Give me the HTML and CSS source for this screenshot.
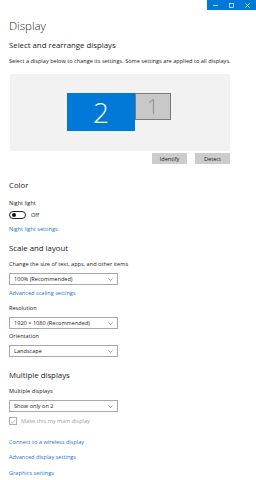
FILE: index.html
```html
<!DOCTYPE html>
<html>
<head>
<meta charset="utf-8">
<link rel="stylesheet" href="styles.css">
</head>
<body>
<div class="titlebar">
  <div class="controls">
    <span class="ctl"><svg width="5" height="5" viewBox="0 0 5 5"><path d="M0 2.5H5" stroke="#fff" stroke-width="0.7"/></svg></span>
    <span class="ctl"><svg width="5" height="5" viewBox="0 0 5 5"><rect x="0.5" y="0.5" width="4" height="4" fill="none" stroke="#fff" stroke-width="0.7"/></svg></span>
    <span class="ctl"><svg width="5" height="5" viewBox="0 0 5 5"><path d="M0.3 0.3L4.7 4.7M4.7 0.3L0.3 4.7" stroke="#fff" stroke-width="0.7"/></svg></span>
  </div>
</div>
<main class="page">
  <h1 class="title">Display</h1>
  <h2 class="sub first">Select and rearrange displays</h2>
  <p class="txt desc">Select a display below to change its settings. Some settings are applied to all displays.</p>
  <div class="arrange">
    <div class="mon mon2">2</div>
    <div class="mon mon1">1</div>
  </div>
  <div class="btnrow">
    <span class="btn">Identify</span>
    <span class="btn">Detect</span>
  </div>

  <h2 class="sub color">Color</h2>
  <p class="txt label nl">Night light</p>
  <div class="toggle-row">
    <span class="toggle"><span class="knob"></span></span>
    <span class="txt">Off</span>
  </div>
  <a class="txt link nls">Night light settings</a>

  <h2 class="sub scale">Scale and layout</h2>
  <p class="txt label chg">Change the size of text, apps, and other items</p>
  <div class="dd"><span>100% (Recommended)</span><svg class="chev" width="5" height="3" viewBox="0 0 5 3"><path d="M0.3 0.3L2.5 2.5L4.7 0.3" fill="none" stroke="#777" stroke-width="0.6"/></svg></div>
  <a class="txt link adv">Advanced scaling settings</a>
  <p class="txt label res">Resolution</p>
  <div class="dd"><span>1920 × 1080 (Recommended)</span><svg class="chev" width="5" height="3" viewBox="0 0 5 3"><path d="M0.3 0.3L2.5 2.5L4.7 0.3" fill="none" stroke="#777" stroke-width="0.6"/></svg></div>
  <p class="txt label ori">Orientation</p>
  <div class="dd"><span>Landscape</span><svg class="chev" width="5" height="3" viewBox="0 0 5 3"><path d="M0.3 0.3L2.5 2.5L4.7 0.3" fill="none" stroke="#777" stroke-width="0.6"/></svg></div>

  <h2 class="sub multi">Multiple displays</h2>
  <p class="txt label md">Multiple displays</p>
  <div class="dd"><span>Show only on 2</span><svg class="chev" width="5" height="3" viewBox="0 0 5 3"><path d="M0.3 0.3L2.5 2.5L4.7 0.3" fill="none" stroke="#777" stroke-width="0.6"/></svg></div>
  <div class="check-row">
    <span class="cbox"><svg width="7" height="7" viewBox="0 0 7 7"><path d="M1 3.6L2.8 5.3L6 1.5" fill="none" stroke="#aaa" stroke-width="0.8"/></svg></span>
    <span class="txt dis">Make this my main display</span>
  </div>
  <a class="txt link l1">Connect to a wireless display</a>
  <a class="txt link l2">Advanced display settings</a>
  <a class="txt link l3">Graphics settings</a>
</main>
</body>
</html>
```

FILE: styles.css
```css
* { box-sizing: border-box; }
html, body { margin: 0; padding: 0; background: #fff; }
body {
  font-family: "Open Sans", "Noto Sans", "Liberation Sans", sans-serif;
  color: #1a1a1a;
  width: 256px;
  height: 480px;
  overflow: hidden;
}
.titlebar { height: 10px; display: flex; justify-content: flex-end; }
.controls { width: 49px; height: 10px; background: #0078d7; display: flex; }
.ctl { flex: 1; display: flex; align-items: center; justify-content: center; }
.ctl svg { display: block; }

.page { padding-left: 9px; display: flex; flex-direction: column; align-items: flex-start; }

.title { margin: 9px 0 0; font-size: 11.5px; font-weight: 300; line-height: 14px; }
.sub { margin: 0; font-size: 7.8px; font-weight: 400; line-height: 10px; }
.sub.first { margin-top: 7px; }
.txt { font-size: 5.6px; line-height: 7px; margin: 0; }
.desc { margin-top: 8px; }

.arrange {
  margin-top: 9px;
  margin-left: 1px;
  width: 220px; height: 77px;
  background: #f2f2f2;
  display: flex; align-items: flex-start;
  padding: 19px 0 0 57px;
}
.mon {
  display: flex; align-items: center; justify-content: center;
  font-family: "Open Sans", sans-serif; font-weight: 300;
}
.mon2 { width: 68px; height: 38px; background: #0078d7; color: #fff; font-size: 28px; }
.mon1 { width: 36px; height: 27px; background: #c8c8c8; border: 1px solid #7a7a7a; color: #8f8f8f; font-size: 20px; }

.btnrow { align-self: stretch; display: flex; justify-content: flex-end; gap: 8px; padding-right: 26px; margin-top: 2px; }
.btn { width: 35px; height: 11px; background: #cccccc; font-size: 5.6px; display: flex; align-items: center; justify-content: center; color: #222; }

.color { margin-top: 16px; }
.nl { margin-top: 10px; }
.toggle-row { display: flex; align-items: center; gap: 5px; margin-top: 4px; }
.toggle { width: 17px; height: 8px; border: 1px solid #222; border-radius: 4px; display: flex; align-items: center; padding-left: 1.5px; }
.knob { width: 4px; height: 4px; border-radius: 50%; background: #111; }
.link { color: #1c73c4; text-decoration: none; display: block; }
.nls { margin-top: 7px; }

.scale { margin-top: 10px; }
.chg { margin-top: 8px; }
.dd {
  margin-top: 5px;
  width: 109px; height: 12px;
  border: 1px solid #a8a8a8;
  display: flex; align-items: center; justify-content: space-between;
  padding: 0 4px 0 4px;
  font-size: 5.6px;
}
.chev { display: block; }
.adv { margin-top: 5px; }
.res { margin-top: 8px; }
.ori { margin-top: 4px; }

.multi { margin-top: 13px; }
.md { margin-top: 8px; }
.check-row { display: flex; align-items: center; gap: 4px; margin-top: 5px; }
.cbox { width: 8px; height: 8px; border: 1px solid #b0b0b0; display: flex; align-items: center; justify-content: center; }
.cbox svg { display: block; }
.dis { color: #a0a0a0; }
.l1 { margin-top: 14px; }
.l2 { margin-top: 8px; }
.l3 { margin-top: 9px; }
```
